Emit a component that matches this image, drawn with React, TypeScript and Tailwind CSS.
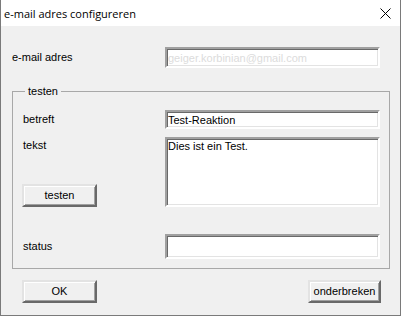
import { useState } from 'react';

const font = { fontFamily: '"Liberation Sans", Arial, sans-serif' };

const sunken =
  'border-2 border-t-[#a0a0a0] border-l-[#a0a0a0] border-b-white border-r-white bg-white shadow-[inset_1px_1px_0_#696969,inset_-1px_-1px_0_#e3e3e3] outline-none';

const raised =
  'border-2 border-t-[#e3e3e3] border-l-[#e3e3e3] border-b-[#696969] border-r-[#696969] bg-[#f0f0f0] shadow-[inset_1px_1px_0_#ffffff,inset_-1px_-1px_0_#a0a0a0] text-[11px] text-black leading-none';

function CloseIcon() {
  return (
    <svg width="11" height="11" viewBox="0 0 11 11" className="block">
      <path d="M0.5 0.5 L10.5 10.5 M10.5 0.5 L0.5 10.5" stroke="#000" strokeWidth="1" />
    </svg>
  );
}

export default function App() {
  const [subject, setSubject] = useState('Test-Reaktion');
  const [body, setBody] = useState('Dies ist ein Test.');

  return (
    <div
      className="flex flex-col w-[401px] h-[316px] border-x border-b border-[#7a7a7a] bg-white text-[11px] text-black"
      style={font}
    >
      {/* title bar */}
      <div className="flex h-[26px] shrink-0 items-center justify-between pl-[3px] pr-[9px] bg-white">
        <span className="text-[11px] leading-none" style={{ fontFamily: '"Open Sans", "Noto Sans", sans-serif' }}>
          e-mail adres configureren
        </span>
        <CloseIcon />
      </div>

      <div className="flex flex-1 flex-col bg-[#f0f0f0] pl-[11px] pr-[10px]">
        <div className="mt-[21px] flex items-center">
          <span className="w-[153px]">e-mail adres</span>
          <input
            readOnly
            disabled
            value="geiger.korbinian@gmail.com"
            className={`${sunken} h-[21px] w-[215px] pl-[1px] text-[11px] text-[#dcdcdc]`}
            style={font}
          />
        </div>

        <fieldset className="mt-[17px] w-[378px] border border-[#a8a8a8] pl-[9px] pb-[9px]">
          <legend className="ml-[3px] px-[3px] leading-[13px]">testen</legend>

          <div className="mt-[12px] flex items-center">
            <span className="w-[143px] pl-[1px]">betreft</span>
            <input
              value={subject}
              onChange={(e) => setSubject(e.target.value)}
              className={`${sunken} h-[19px] w-[215px] pl-[1px] text-[11px]`}
              style={font}
            />
          </div>

          <div className="mt-[8px] flex">
            <div className="flex h-[70px] w-[143px] flex-col justify-between">
              <span className="pl-[1px] pt-[2px] leading-[13px]">tekst</span>
              <button className={`${raised} h-[23px] w-[75px]`} style={font}>
                testen
              </button>
            </div>
            <textarea
              value={body}
              onChange={(e) => setBody(e.target.value)}
              className={`${sunken} h-[70px] w-[215px] resize-none pl-[1px] pt-[1px] text-[11px] leading-[13px]`}
              style={font}
            />
          </div>

          <div className="mt-[27px] flex items-center">
            <span className="w-[143px] pl-[1px]">status</span>
            <input className={`${sunken} h-[25px] w-[215px] pl-[1px] text-[11px]`} style={font} />
          </div>
        </fieldset>

        <div className="mt-[11px] flex justify-between pl-[10px] pr-[9px]">
          <button className={`${raised} h-[23px] w-[75px]`} style={font}>
            OK
          </button>
          <button className={`${raised} h-[23px] w-[73px]`} style={font}>
            onderbreken
          </button>
        </div>
      </div>
    </div>
  );
}
